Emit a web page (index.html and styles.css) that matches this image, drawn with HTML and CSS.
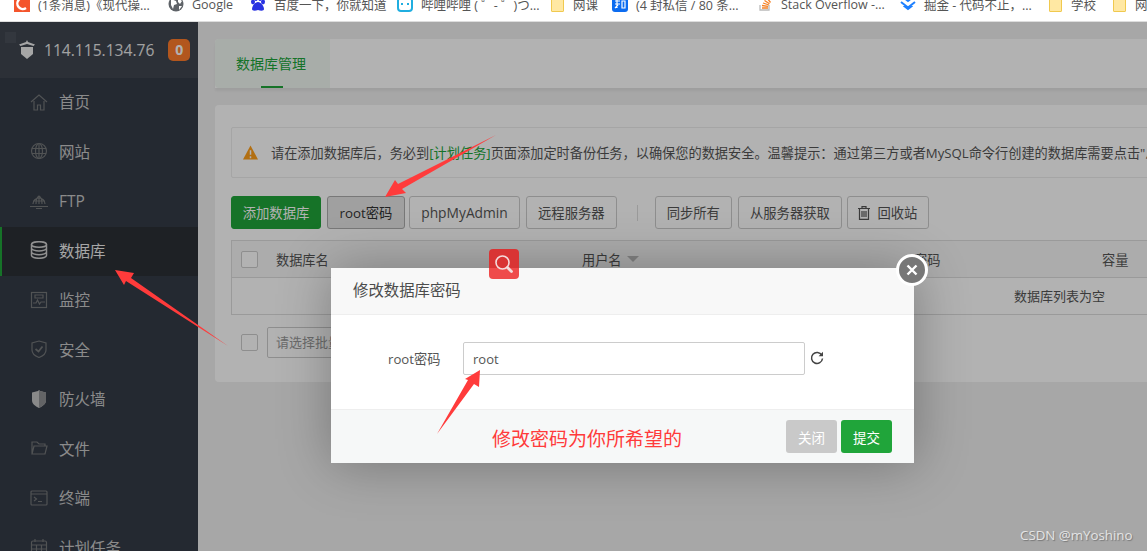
FILE: index.html
```html
<!DOCTYPE html>
<html lang="zh-CN">
<head>
  <meta charset="UTF-8">
  <title>数据库管理</title>
  <link rel="stylesheet" href="styles.css">
</head>
<body>
  <div class="bookmarks">
    <div class="mark"><svg class="mark-icon" viewBox="0 0 16 16"><rect width="16" height="16" fill="#f4552c"/><path d="M12 3a5.5 5.5 0 1 0 0 9" fill="none" stroke="#fff" stroke-width="2.4"/></svg><span>(1条消息)《现代操...</span></div>
    <div class="mark"><svg class="mark-icon" viewBox="0 0 16 16"><circle cx="8" cy="8" r="7.5" fill="#5f6368"/><path d="M3 3l5 2 1 3-3 1-1 4-2-4zM10 2l4 3-2 3-2-2zM11 10l3 0-3 4z" fill="#fff"/></svg><span>Google</span></div>
    <div class="mark"><svg class="mark-icon" viewBox="0 0 16 16" fill="#2932e1"><ellipse cx="3" cy="6" rx="2" ry="2.4"/><ellipse cx="6" cy="2.5" rx="1.8" ry="2.4"/><ellipse cx="10" cy="2.5" rx="1.8" ry="2.4"/><ellipse cx="13" cy="6" rx="2" ry="2.4"/><path d="M8 6c-3 0-6 4-6 7 0 2 3 2 6 1 3 1 6 1 6-1 0-3-3-7-6-7z"/></svg><span>百度一下，你就知道</span></div>
    <div class="mark"><svg class="mark-icon" viewBox="0 0 16 16"><rect x="1" y="2" width="14" height="13" rx="3" fill="none" stroke="#20aee0" stroke-width="2"/><path d="M5 7v2M11 7v2" stroke="#20aee0" stroke-width="2"/></svg><span>哔哩哔哩 ( ゜- ゜)つ...</span></div>
    <div class="mark"><span class="folder"></span><span>网课</span></div>
    <div class="mark"><svg class="mark-icon" viewBox="0 0 16 16"><rect width="16" height="16" rx="3" fill="#0c6cf0"/><path d="M3 5h5M5 3v9M3 8h5M3 12l3-3M10 5h3v7h-3z" fill="none" stroke="#fff" stroke-width="1.2"/></svg><span>(4 封私信 / 80 条...</span></div>
    <div class="mark"><svg class="mark-icon" viewBox="0 0 16 16"><path d="M3 9v5h9V9" fill="none" stroke="#bbb" stroke-width="1.3"/><path d="M5 12h6M5 9.5l6 .8M6 7l6 2M7.5 4.5l5 3.2M10 2l3.5 4.5" stroke="#f48024" stroke-width="1.3"/></svg><span>Stack Overflow -...</span></div>
    <div class="mark"><svg class="mark-icon" viewBox="0 0 16 16"><path d="M8 1l2.5 2L8 5 5.500 3zM1 6l7 5.500L15 6M3.500 9.500L8 13l4.500-3.500" fill="none" stroke="#1e80ff" stroke-width="2"/></svg><span>掘金 - 代码不止，...</span></div>
    <div class="mark"><span class="folder"></span><span>学校</span></div>
    <div class="mark"><span class="folder"></span><span>网</span></div>
  </div>

  <div class="page">
    <aside class="sidebar">
      <div class="brand">
        <span class="ghost"></span>
        <svg class="brand-logo" viewBox="0 0 18 20"><path d="M9 0l1 2 7 2.500-1.500 1.500L9 4 2.500 6 1 4.500 8 2z" fill="#eee"/><path d="M3 7h12v7l-6 5-6-5z" fill="#eee"/></svg>
        <span class="brand-ip">114.115.134.76</span>
        <span class="brand-badge">0</span>
      </div>
      <nav class="menu">
        <a class="menu-item"><svg class="menu-icon" viewBox="0 0 18 18"><path d="M1 9l8-7 8 7M4 8v9h3.500v-5h3v5H14V8"/></svg>首页</a>
        <a class="menu-item"><svg class="menu-icon" viewBox="0 0 18 18"><circle cx="9" cy="9" r="7.500"/><ellipse cx="9" cy="9" rx="3.500" ry="7.500"/><path d="M2 6.500h14M2 11.500h14M9 1.500v15"/></svg>网站</a>
        <a class="menu-item"><svg class="menu-icon" viewBox="0 0 18 18"><path d="M3 12a6 6 0 1 1 12 0M3 9h12M6 12c0-4 1-7 3-8 2 1 3 4 3 8M9 4v8M0 14.500h18M6 16.500h6"/></svg>FTP</a>
        <a class="menu-item active"><svg class="menu-icon db" viewBox="0 0 18 18"><ellipse cx="9" cy="3.500" rx="7.500" ry="2.800"/><path d="M1.500 3.500v11c0 1.500 3.400 2.800 7.500 2.800s7.500-1.300 7.500-2.800v-11M1.500 7.200c0 1.500 3.400 2.800 7.500 2.800s7.500-1.300 7.500-2.800M1.500 10.900c0 1.500 3.400 2.800 7.500 2.800s7.500-1.300 7.500-2.800"/></svg>数据库</a>
        <a class="menu-item"><svg class="menu-icon" viewBox="0 0 18 18"><rect x="1.500" y="1.500" width="15" height="15"/><path d="M3 12h3l1.500-3 2 4 1.500-2h4M5 4h8v3H5z"/></svg>监控</a>
        <a class="menu-item"><svg class="menu-icon" viewBox="0 0 18 18"><path d="M9 1l7 2v7c0 3.500-3 6-7 7.500C5 16 2 13.500 2 10V3z"/><path d="M5.500 9l3 2.500 4-5" stroke-width="1.800"/></svg>安全</a>
        <a class="menu-item"><svg class="menu-icon solid" viewBox="0 0 18 18"><path d="M9 0l1 1 6 1.500v8c0 3-3 5.500-7 7.500-4-2-7-4.500-7-7.500v-8L8 1z"/><path class="half" d="M9 0l1 1 6 1.500v8c0 3-3 5.500-7 7.500z"/></svg>防火墙</a>
        <a class="menu-item"><svg class="menu-icon" viewBox="0 0 18 18"><path d="M2 15V3h5l2 2h6v2M2 15l2-8h13l-2 8z"/></svg>文件</a>
        <a class="menu-item"><svg class="menu-icon" viewBox="0 0 18 18"><rect x="1" y="2" width="16" height="14" rx="1"/><path d="M1 5h16M4 8l2.500 2L4 12M8 12.500h4"/></svg>终端</a>
        <a class="menu-item"><svg class="menu-icon" viewBox="0 0 18 18"><rect x="1.500" y="3" width="15" height="14" rx="1.500"/><path d="M5 1v3M13 1v3M1.500 7h15M1.500 11h15M6.500 7v10M11.500 7v10"/></svg>计划任务</a>
      </nav>
    </aside>

    <main class="content">
      <div class="tabs"><div class="tab">数据库管理</div></div>
      <section class="panel">
        <div class="alert">
          <svg class="alert-icon" viewBox="0 0 16 15"><path d="M8 0l8 15H0z" fill="#ff9f1a"/><path d="M8 5v5M8 11.500v2" stroke="#fff" stroke-width="1.600"/></svg>
          <span>请在添加数据库后，务必到<a class="link">[计划任务]</a>页面添加定时备份任务，以确保您的数据安全。温馨提示：通过第三方或者MySQL命令行创建的数据库需要点击"从服务器获取"才能显示在列表中</span>
        </div>
        <div class="toolbar">
          <button class="btn btn-green">添加数据库</button>
          <button class="btn btn-pressed">root密码</button>
          <button class="btn btn-pma">phpMyAdmin</button>
          <button class="btn">远程服务器</button>
          <span class="tool-sep"></span>
          <button class="btn">同步所有</button>
          <button class="btn">从服务器获取</button>
          <button class="btn btn-recycle"><svg class="trash" viewBox="0 0 12 14"><path d="M0 2.500h12M4 2.500V.7h4v1.800M1.500 2.500V13.300h9V2.500M4 5v6M6 5v6M8 5v6" fill="none" stroke="#555" stroke-width="1.200"/></svg>回收站</button>
        </div>
        <div class="table">
          <div class="thead">
            <span class="check"></span>
            <span class="th-name">数据库名</span>
            <span class="th-user">用户名<i class="caret"></i></span>
            <span class="th-pass">密码</span>
            <span class="th-size">容量</span>
          </div>
          <div class="empty">数据库列表为空</div>
        </div>
        <div class="batch">
          <span class="check"></span>
          <span class="batch-select">请选择批量操作</span>
        </div>
      </section>
    </main>
  </div>

  <div class="mask"></div>

  <div class="search-chip"><svg viewBox="0 0 20 20" width="20" height="20"><circle cx="8.500" cy="8.500" r="6.500" fill="none" stroke="#f4dcdc" stroke-width="1.600"/><path d="M13.500 13.500l4 4" stroke="#f4dcdc" stroke-width="2.800" stroke-linecap="round"/></svg></div>

  <div class="modal">
    <div class="modal-title">修改数据库密码</div>
    <div class="modal-body">
      <label class="field-label">root密码</label>
      <div class="field-input">root</div>
      <svg class="refresh" viewBox="0 0 14 14"><path d="M11.800 4.200A5.500 5.500 0 1 0 12.500 7.500" fill="none" stroke="#444" stroke-width="1.500"/><path d="M13 .8v4.400H8.600z" fill="#444"/></svg>
    </div>
    <div class="modal-foot">
      <button class="btn-sm btn-gray">关闭</button>
      <button class="btn-sm btn-submit">提交</button>
    </div>
    <div class="modal-close"><svg viewBox="0 0 12 12" width="12" height="12"><path d="M1.500 1.500l9 9M10.500 1.500l-9 9" stroke="#fff" stroke-width="2.400"/></svg></div>
  </div>

  <svg class="arrows" viewBox="0 0 1147 551">
    <polygon points="115,270 134,273 131,278 228,346 126,281 124,285"/>
    <polygon points="385,197 395,180 398,184 496,135 402,189 406,193"/>
    <polygon points="480,370 479,387 474,384 437,434 468,380 465,379"/>
  </svg>
  <div class="note">修改密码为你所希望的</div>
  <div class="watermark">CSDN @mYoshino</div>
</body>
</html>
```

FILE: styles.css
```css
* { box-sizing: border-box; }
html, body { margin: 0; height: 100%; overflow: hidden; }
body { background: #f0f0f0; font-family: "Open Sans", "Noto Sans CJK SC", sans-serif; color: #555; position: relative; }

/* browser bookmarks */
.bookmarks {
  display: grid; grid-template-columns: 154px 82px 147px 154px 61px 145px 143px 149px 64px 34px;
  height: 22px; padding-left: 14px; background: #fff; border-bottom: 1px solid #ddd;
  overflow: hidden; font-size: 12.500px; color: #555;
}
.mark { display: flex; align-items: center; gap: 8px; height: 16px; margin-top: -4px; white-space: nowrap; }
.mark-icon { width: 16px; height: 16px; flex: none; }
.folder {
  width: 13px; height: 15px; flex: none; margin-right: 1px;
  background: #ffe8a3; border: 1px solid #f0c94f; border-radius: 1px;
}

.page { display: flex; height: calc(100% - 22px); overflow: hidden; }

/* sidebar */
.sidebar { width: 198px; flex: none; background: #343b47; color: #d4d4d4; }
.brand { display: flex; align-items: center; height: 56px; padding-left: 18px; background: #3f4550; position: relative; }
.ghost { position: absolute; left: 5px; top: 10px; width: 11px; height: 11px; background: #4a505a; }
.brand-logo { width: 18px; height: 20px; flex: none; }
.brand-ip { margin-left: 8px; font-size: 15.600px; color: #e8e8e8; }
.brand-badge {
  width: 22px; height: 22px; margin-left: 14px; border-radius: 5px; background: #ff7b2a;
  color: #fff; font-size: 14px; font-weight: 700; line-height: 22px; text-align: center;
}
.menu-item {
  display: flex; align-items: center; gap: 11px; height: 49.500px; padding: 0 0 2px 30px;
  font-size: 15.500px; color: #c8c8c8;
}
.menu-item.active { background: #2c3036; box-shadow: inset 2px 0 0 #20a53a; color: #eee; }
.menu-icon { width: 18px; height: 18px; flex: none; fill: none; stroke: #747779; stroke-width: 1.200; }
.menu-icon.db { stroke: #d0d0d0; stroke-width: 1.500; }
.menu-icon.solid { fill: #c4c4c4; stroke: none; }
.menu-icon.solid .half { fill: #8f9092; }

/* main area */
.content { width: 1706px; flex: none; padding: 17px 0 0 17px; }
.tabs { height: 49px; background: #fff; border-radius: 4px 4px 0 0; box-shadow: 0 3px 3px rgba(0,0,0,.06); }
.tab {
  width: 115px; height: 49px; padding-left: 21px; background: #f1f8f3; border-radius: 4px 0 0 4px;
  font-size: 14px; line-height: 50px; color: #20a53a; position: relative;
}
.tab::after { content: ""; position: absolute; left: 46px; bottom: 0; width: 22px; height: 2px; background: #20a53a; }
.panel { margin-top: 17px; padding: 22px 16px 24px; background: #fff; border-radius: 4px; }
.alert {
  display: flex; align-items: center; gap: 13px; height: 51px; padding-left: 11px;
  background: #fff; border: 1px solid #ececec; border-radius: 2px;
  font-size: 13.200px; white-space: nowrap; color: #555;
}
.alert-icon { width: 15px; height: 15px; flex: none; }
.link { color: #20a53a; }

.toolbar { display: flex; align-items: center; gap: 6px; margin-top: 18px; }
.btn {
  display: flex; align-items: center; justify-content: center; height: 33px; padding: 0 11px;
  background: #fff; border: 1px solid #ccc; border-radius: 3px;
  font: 13.330px "Open Sans", "Noto Sans CJK SC", sans-serif; color: #555; white-space: nowrap;
}
.btn-green { width: 90px; padding: 0; background: #20a53a; border-color: #20a53a; color: #fff; }
.btn-pressed { width: 78px; padding: 0; background: #e6e6e6; border-color: #adadad; color: #333; }
.btn-pma { width: 111px; padding: 0; margin-left: -2px; font-size: 13.800px; }
.btn-recycle { width: 82px; padding: 0; margin-left: -1px; }
.trash { width: 12px; height: 14px; margin-right: 7px; }
.tool-sep { width: 1px; height: 16px; margin: 0 11px 0 14px; background: #ddd; }

.table { margin-top: 11px; border: 1px solid #ddd; }
.thead {
  display: flex; align-items: center; height: 37px; padding-left: 9px;
  background: #f6f6f6; border-bottom: 1px solid #ddd; font-size: 13.200px; white-space: nowrap;
}
.check { width: 17px; height: 17px; flex: none; background: #fff; border: 1px solid #ccc; border-radius: 2px; }
.th-name { width: 306px; margin-left: 18px; }
.th-user { width: 332px; display: flex; align-items: center; gap: 5px; }
.caret { width: 0; height: 0; border: 6px solid transparent; border-top: 6px solid #bbb; border-bottom: 0; }
.th-pass { width: 188px; }
.empty { height: 36px; font-size: 13px; line-height: 36px; text-align: center; }
.batch { display: flex; align-items: center; gap: 9px; margin-top: 12px; padding-left: 10px; }
.batch-select {
  width: 140px; height: 31px; padding-left: 8px; background: #fff; border: 1px solid #ccc; border-radius: 2px;
  font-size: 13px; line-height: 29px; color: #999;
}

/* dim layer and dialog */
.mask { position: absolute; left: 0; right: 0; top: 22px; bottom: 0; background: rgba(0,0,0,.3); }
.modal {
  position: absolute; left: 331px; top: 268px; width: 583px; height: 195px;
  background: #fff; box-shadow: 1px 1px 50px rgba(0,0,0,.3);
  display: flex; flex-direction: column;
}
.modal-title {
  height: 47px; padding-left: 22px; background: #f8f8f8; border-bottom: 1px solid #eee;
  font-size: 15.400px; line-height: 46px; color: #4c4c4c;
}
.modal-body { display: flex; align-items: center; height: 94px; padding: 0 0 8px 57px; }
.field-label { width: 75px; padding-top: 1px; font-size: 13.200px; color: #555; }
.field-input {
  width: 342px; height: 33px; padding-left: 9px; border: 1px solid #ccc; border-radius: 2px;
  font-size: 13px; line-height: 33px; color: #555;
}
.refresh { width: 14px; height: 14px; margin-left: 5px; }
.modal-foot {
  display: flex; justify-content: flex-end; align-items: center; gap: 4px; flex: 1; padding-right: 22px;
  background: #f6f8f8; border-top: 1px solid #eee;
}
.btn-sm {
  width: 51px; height: 33px; border: 0; border-radius: 3px; color: #fff;
  font: 13.500px "Noto Sans CJK SC", sans-serif;
}
.btn-gray { background: #c9c9c9; }
.btn-submit { background: #20a53a; }
.modal-close {
  position: absolute; right: -14px; top: -14px; width: 32px; height: 32px;
  display: flex; align-items: center; justify-content: center;
  background: #777; border: 3px solid #fff; border-radius: 50%;
}
.search-chip {
  position: absolute; left: 489px; top: 249px; width: 30px; height: 30px; z-index: 2;
  display: flex; align-items: center; justify-content: center; border-radius: 4px;
  background: linear-gradient(#d93434 19px, #ef4b4b 19px);
}

/* screenshot annotations */
.arrows { position: absolute; left: 0; top: 0; width: 1147px; height: 551px; fill: #ff3b3b; pointer-events: none; }
.note { position: absolute; left: 492px; top: 424px; font: 19px/28px "Noto Sans CJK SC", sans-serif; color: #ff3b3b; }
.watermark { position: absolute; left: 1020px; top: 527px; font: 13.300px/16px "Open Sans", sans-serif; color: #e4e4e4; text-shadow: 1px 1px 1px #777; white-space: nowrap; }
```
